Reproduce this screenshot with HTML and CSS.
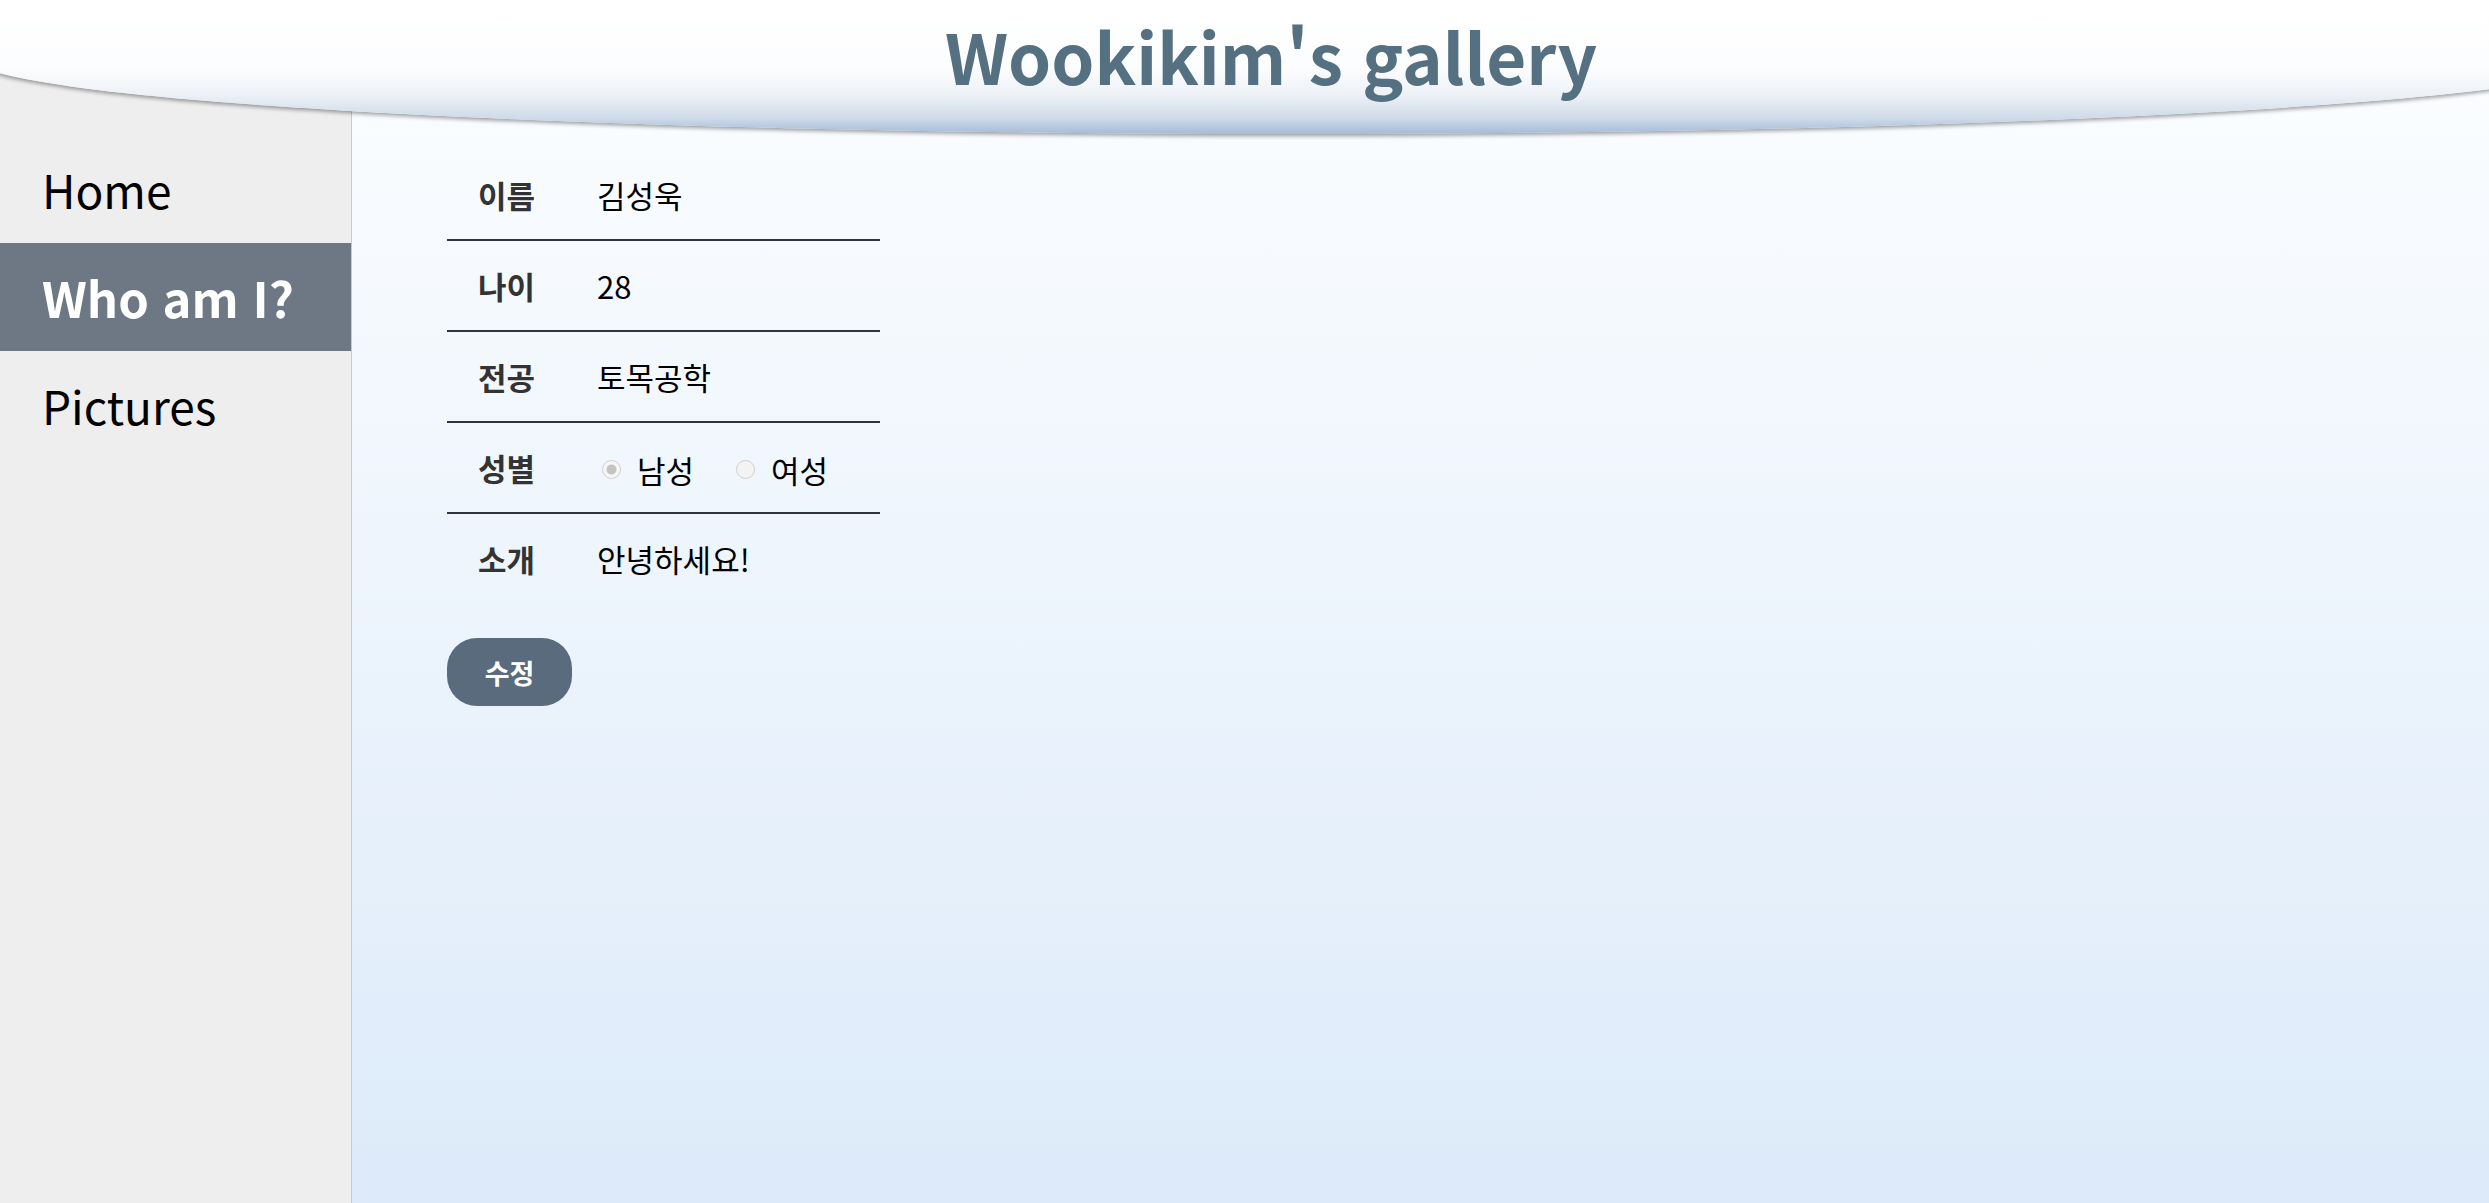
FILE: index.html
```html
<!DOCTYPE html>
<html lang="ko">
<head>
<meta charset="utf-8">
<title>Wookikim's gallery</title>
<link rel="stylesheet" href="styles.css">
</head>
<body>
<div class="page">
  <header class="top">
    <h1 class="title">Wookikim's gallery</h1>
  </header>
  <div class="body">
    <nav class="side">
      <a class="nav-item" href="#">Home</a>
      <a class="nav-item active" href="#">Who am I?</a>
      <a class="nav-item" href="#">Pictures</a>
    </nav>
    <main class="content">
      <table class="info">
        <tr><td class="label">이름</td><td class="val">김성욱</td></tr>
        <tr><td class="label">나이</td><td class="val">28</td></tr>
        <tr><td class="label">전공</td><td class="val">토목공학</td></tr>
        <tr><td class="label">성별</td><td class="val">
          <label class="opt"><input class="radio" type="radio" name="g" checked disabled>남성</label><label class="opt second"><input class="radio" type="radio" name="g" disabled>여성</label>
        </td></tr>
        <tr><td class="label">소개</td><td class="val">안녕하세요!</td></tr>
      </table>
      <button class="edit" type="button">수정</button>
    </main>
  </div>
</div>
</body>
</html>
```
FILE: styles.css
```css
html, body {
  margin: 0;
  height: 100%;
  overflow: hidden;
}
body {
  font-family: "Noto Sans CJK KR", "Open Sans", sans-serif;
}
.page {
  height: 100vh;
  display: flex;
  flex-direction: column;
  overflow: hidden;
}
.top {
  position: relative;
  z-index: 2;
  flex: none;
  box-sizing: border-box;
  height: 134px;
  width: 2640px;
  margin-left: -30px;
  margin-bottom: -62px;
  padding-right: 38px;
  border-radius: 0 0 1320px 1320px / 0 0 77px 77px;
  background: linear-gradient(to bottom, #ffffff 0%, #fcfdfe 50%, #eef2f7 70%, #cfdbe9 88%, #a4bbd7 100%);
  box-shadow: 0 2px 4px rgba(0, 0, 0, 0.4);
  display: flex;
  justify-content: center;
}
.title {
  margin: 0;
  padding-top: 14px;
  font-size: 69px;
  font-weight: 700;
  line-height: 1.2;
  color: #557080;
}
.body {
  flex: 1;
  display: flex;
  min-height: 0;
}
.side {
  flex: none;
  width: 351px;
  background: #eeeeee;
  border-right: 1px solid #c9c9c9;
  padding-top: 63px;
}
.nav-item {
  display: block;
  height: 108px;
  line-height: 108px;
  padding-left: 42px;
  font-size: 46px;
  color: #000;
  text-decoration: none;
}
.nav-item.active {
  background: #6e7885;
  color: #fff;
  font-size: 49px;
  font-weight: 700;
}
.content {
  flex: 1;
  background: linear-gradient(to bottom, #fbfdff 0%, #dceaf9 100%);
  padding: 78px 0 0 95px;
}
.info {
  border-collapse: collapse;
  width: 433px;
}
.info tr {
  border-bottom: 2px solid #30343b;
}
.info tr:last-child {
  border-bottom: none;
}
.info td {
  height: 89px;
  padding: 0 31px;
  font-size: 31px;
  vertical-align: middle;
}
.info .label {
  width: 1px;
  white-space: nowrap;
  font-weight: 700;
  color: #333;
}
.info .val {
  color: #000;
}
.opt {
  display: inline-flex;
  align-items: center;
}
.opt.second {
  margin-left: 37px;
}
.radio {
  appearance: none;
  -webkit-appearance: none;
  box-sizing: border-box;
  width: 19px;
  height: 19px;
  margin: 0 16px 0 5px;
  border: 1.5px solid #cfcfcf;
  border-radius: 50%;
  background: #f3f3f3;
}
.radio:checked {
  background: radial-gradient(circle, #c4c4c4 0 4.5px, #f6f6f6 5.5px);
}
.edit {
  display: block;
  margin-top: 35px;
  width: 125px;
  height: 68px;
  border: 0;
  border-radius: 30px;
  background: #5b6b7e;
  color: #fff;
  font-family: "Noto Sans CJK KR", sans-serif;
  font-size: 27px;
  font-weight: 700;
}
```
